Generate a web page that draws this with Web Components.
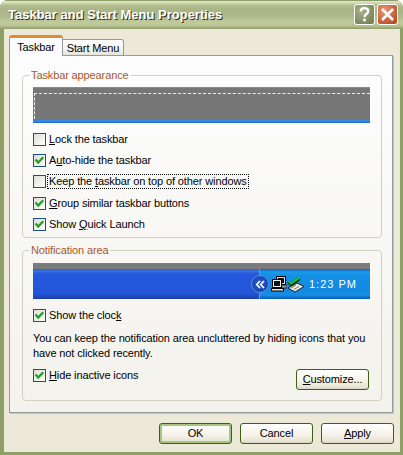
<!DOCTYPE html>
<html lang="en">
<head>
<meta charset="utf-8">
<title>Taskbar and Start Menu Properties</title>
<style>
    html, body { margin: 0; background: #fff; }
</style>
</head>
<body>
<xp-window caption="Taskbar and Start Menu Properties">
    <xp-tabs>
        <xp-group legend="Taskbar appearance" style="height:169px">
            <taskbar-preview></taskbar-preview>
            <check-row style="margin-top:6px"><u>L</u>ock the taskbar</check-row>
            <check-row checked>A<u>u</u>to-hide the taskbar</check-row>
            <check-row focused>Keep the <u>t</u>askbar on top of other windows</check-row>
            <check-row checked style="margin-top:1px"><u>G</u>roup similar taskbar buttons</check-row>
            <check-row checked>Show <u>Q</u>uick Launch</check-row>
        </xp-group>
        <xp-group legend="Notification area" style="height:157px;margin-top:6px">
            <tray-preview style="margin-top:1px"></tray-preview>
            <check-row checked style="margin-top:6px">Show the cloc<u>k</u></check-row>
            <hint-text>You can keep the notification area uncluttered by hiding icons that you have not clicked recently.</hint-text>
            <action-row>
                <check-row checked><u>H</u>ide inactive icons</check-row>
                <xp-button style="width:73px;margin:4px 1px 0 0"><u>C</u>ustomize...</xp-button>
            </action-row>
        </xp-group>
    </xp-tabs>
    <xp-button slot="buttons" default>OK</xp-button>
    <xp-button slot="buttons">Cancel</xp-button>
    <xp-button slot="buttons"><u>A</u>pply</xp-button>
</xp-window>

<script>
const UI_FONT = `"Liberation Sans", Arial, sans-serif`;

class XpWindow extends HTMLElement {
    constructor() {
        super();
        this.attachShadow({ mode: 'open' });
        this.shadowRoot.innerHTML = `
            <style>
                :host {
                    display: flex;
                    flex-direction: column;
                    width: 403px;
                    height: 455px;
                    box-sizing: border-box;
                    border-radius: 8px 8px 0 0;
                    overflow: hidden;
                    background: #8f9f68;
                    font: 11px/13px ${UI_FONT};
                    letter-spacing: -.12px;
                    color: #000;
                }
                .title {
                    flex: none;
                    display: flex;
                    align-items: center;
                    height: 29px;
                    padding: 0 5px 0 8px;
                    box-sizing: border-box;
                    background: linear-gradient(#8e9f6c 0, #8e9f6c 1px, #dfe6c2 1px, #d3dbb2 3px, #b3bf90 5px, #a9b585 9px, #adb98a 16px, #c2cb9c 23px, #b5c090 26px, #8f9f66 29px);
                }
                .caption {
                    flex: 1;
                    font: bold 13px/16px "Liberation Sans", Arial, sans-serif;
                    letter-spacing: 0;
                    color: #fff;
                    text-shadow: 1px 1px 0 #2b2b18;
                    white-space: nowrap;
                }
                .cap {
                    width: 21px;
                    height: 21px;
                    margin-left: 2px;
                    box-sizing: border-box;
                    border: 1px solid #fff;
                    border-radius: 3px;
                    display: flex;
                    align-items: center;
                    justify-content: center;
                }
                .help { background: radial-gradient(circle at 35% 30%, #a9b188, #767f56 85%); }
                .close { background: radial-gradient(circle at 35% 30%, #e89a76, #bd4a22 85%); }
                .body {
                    flex: 1;
                    display: flex;
                    flex-direction: column;
                    margin: 0 3px 3px 4px;
                    padding: 7px 6px 8px 5px;
                    background: #ece9d8;
                }
                .buttons {
                    flex: none;
                    display: flex;
                    justify-content: flex-end;
                    gap: 8px;
                    margin-top: 10px;
                }
            </style>
            <div class="title">
                <span class="caption"></span>
                <span class="cap help">
                    <svg width="13" height="15" viewBox="0 0 13 15"><path d="M2.8 4.5C2.8 2.4 4.5 1.2 6.5 1.2S10.2 2.4 10.2 4.2c0 2.8-3.7 2.8-3.7 5.8" fill="none" stroke="#fff" stroke-width="2.3"/><rect x="5.2" y="11.5" width="2.6" height="2.8" fill="#fff"/></svg>
                </span>
                <span class="cap close">
                    <svg width="15" height="15" viewBox="0 0 15 15"><path d="M2 2l11 11M13 2L2 13" fill="none" stroke="#fff" stroke-width="2.5"/></svg>
                </span>
            </div>
            <div class="body">
                <slot></slot>
                <div class="buttons"><slot name="buttons"></slot></div>
            </div>
        `;
        this.shadowRoot.querySelector('.caption').textContent = this.getAttribute('caption');
    }
}

class XpTabs extends HTMLElement {
    constructor() {
        super();
        this.attachShadow({ mode: 'open' });
        this.shadowRoot.innerHTML = `
            <style>
                :host { display: flex; flex-direction: column; flex: 1; min-height: 0; margin-right: 1px; }
                .strip { display: flex; align-items: flex-end; height: 20px; flex: none; margin-bottom: -1px; }
                .tab {
                    box-sizing: border-box;
                    position: relative;
                    text-align: center;
                }
                .on {
                    width: 54px;
                    height: 21px;
                    z-index: 2;
                    padding-top: 3px;
                    background: #fcfcfe;
                    border: 1px solid #919b9c;
                    border-top: 3px solid #e68b2c;
                    border-bottom: 0;
                    border-radius: 3px 3px 0 0;
                }
                .off {
                    width: 61px;
                    height: 17px;
                    padding-top: 2px;
                    background: linear-gradient(#fff, #f4f3ee 60%, #e6e4da);
                    border: 1px solid #919b9c;
                    border-left: 0;
                    border-radius: 0 3px 0 0;
                }
                .page {
                    flex: 1;
                    min-height: 0;
                    box-sizing: border-box;
                    padding: 13px 10px 0 12px;
                    border: 1px solid #919b9c;
                    box-shadow: 1px 1px 0 #c8c6b6;
                    background: linear-gradient(#fdfdfe, #f3f2ec);
                }
            </style>
            <div class="strip">
                <div class="tab on">Taskbar</div>
                <div class="tab off">Start Menu</div>
            </div>
            <div class="page"><slot></slot></div>
        `;
    }
}

class XpGroup extends HTMLElement {
    constructor() {
        super();
        this.attachShadow({ mode: 'open' });
        this.shadowRoot.innerHTML = `
            <style>
                :host { display: block; }
                fieldset {
                    margin: 0;
                    padding: 5px 11px 0 10px;
                    height: 100%;
                    box-sizing: border-box;
                    border: 1px solid #d0d0bf;
                    border-radius: 4px;
                }
                legend {
                    margin-left: -4px;
                    padding: 0 2px;
                    color: #a8582a;
                    line-height: 13px;
                }
            </style>
            <fieldset>
                <legend></legend>
                <slot></slot>
            </fieldset>
        `;
        this.shadowRoot.querySelector('legend').textContent = this.getAttribute('legend');
    }
}

class CheckRow extends HTMLElement {
    constructor() {
        super();
        this.attachShadow({ mode: 'open' });
        const tick = this.hasAttribute('checked')
            ? '<svg width="11" height="11" viewBox="0 0 11 11"><path d="M1.6 4.6L4.2 7.6L9.2 2.2" fill="none" stroke="#21a121" stroke-width="2.3"/></svg>'
            : '';
        this.shadowRoot.innerHTML = `
            <style>
                :host { display: flex; align-items: center; height: 21px; white-space: nowrap; }
                .box {
                    flex: none;
                    width: 13px;
                    height: 13px;
                    box-sizing: border-box;
                    margin-right: 2px;
                    border: 1px solid #1c5180;
                    background: linear-gradient(135deg, #dcdcd7, #fff);
                    display: flex;
                    align-items: center;
                    justify-content: center;
                }
                .label { padding: 0 1px; }
                :host([focused]) .label { outline: 1px dotted #000; }
            </style>
            <span class="box">${tick}</span>
            <span class="label"><slot></slot></span>
        `;
    }
}

class HintText extends HTMLElement {
    constructor() {
        super();
        this.attachShadow({ mode: 'open' });
        this.shadowRoot.innerHTML = `
            <style>
                :host { display: block; margin-top: 5px; line-height: 15px; }
            </style>
            <slot></slot>
        `;
    }
}

class ActionRow extends HTMLElement {
    constructor() {
        super();
        this.attachShadow({ mode: 'open' });
        this.shadowRoot.innerHTML = `
            <style>
                :host { display: flex; align-items: flex-start; justify-content: space-between; margin-top: 4px; }
            </style>
            <slot></slot>
        `;
    }
}

class XpButton extends HTMLElement {
    constructor() {
        super();
        this.attachShadow({ mode: 'open' });
        this.shadowRoot.innerHTML = `
            <style>
                :host {
                    display: flex;
                    align-items: center;
                    justify-content: center;
                    width: 73px;
                    height: 21px;
                    box-sizing: border-box;
                    border: 1px solid #3f5f14;
                    border-radius: 3px;
                    background: linear-gradient(#fff, #f5f3ea 55%, #e8e4d4 90%, #d8d3bf);
                }
                :host([default]) {
                    box-shadow: inset 0 0 0 2px #a6c581;
                }
            </style>
            <slot></slot>
        `;
    }
}

class TaskbarPreview extends HTMLElement {
    constructor() {
        super();
        this.attachShadow({ mode: 'open' });
        this.shadowRoot.innerHTML = `
            <style>
                :host {
                    display: block;
                    height: 36px;
                    box-sizing: border-box;
                    padding: 6px 0 4px 1px;
                    background: linear-gradient(#8a8a8a 1px, #777 1px);
                }
                .drag {
                    height: 26px;
                    box-sizing: border-box;
                    border-top: 1px dashed #eee;
                    border-left: 1px dashed #eee;
                }
                .strip { height: 4px; margin: 0 0 -4px -1px; background: linear-gradient(#2f80e0, #3a8ce8 50%, #1f62c8); }
            </style>
            <div class="drag"></div>
            <div class="strip"></div>
        `;
    }
}

class TrayPreview extends HTMLElement {
    constructor() {
        super();
        this.attachShadow({ mode: 'open' });
        this.shadowRoot.innerHTML = `
            <style>
                :host {
                    display: flex;
                    height: 36px;
                    box-sizing: border-box;
                    border-top: 6px solid #7b7b7b;
                    color: #fff;
                }
                .bar {
                    flex: 1;
                    background: linear-gradient(#2a5fd0 0, #3a72e0 2px, #2558dc 5px, #2355d8 24px, #1f4ec8 27px, #1a3fa4 30px);
                }
                .tray {
                    flex: none;
                    position: relative;
                    width: 111px;
                    box-sizing: border-box;
                    display: flex;
                    align-items: center;
                    padding-left: 11px;
                    border-left: 1px solid #19b9f3;
                    background: linear-gradient(#0f62c0 0, #1a9ce8 3px, #1290e6 6px, #1488e0 22px, #1590e4 26px, #0c55b8 30px);
                }
                .chev {
                    position: absolute;
                    left: -9px;
                    top: 6px;
                    width: 18px;
                    height: 18px;
                    border-radius: 50%;
                    box-sizing: border-box;
                    border: 1px solid #5d8fe0;
                    background: radial-gradient(circle at 50% 45%, #2a5dd0, #123a9c);
                    display: flex;
                    align-items: center;
                    justify-content: center;
                }
                .clock { margin-left: 4px; letter-spacing: 1px; white-space: nowrap; }
                svg { display: block; flex: none; }
            </style>
            <div class="bar"></div>
            <div class="tray">
                <span class="chev"><svg width="11" height="9" viewBox="0 0 11 9"><path d="M5 1L1.7 4.5L5 8M9 1L5.7 4.5L9 8" fill="none" stroke="#fff" stroke-width="1.6"/></svg></span>
                <svg width="16" height="16" viewBox="0 0 16 16">
                    <rect x="5.5" y="0.5" width="9" height="8" fill="#d8d8d8" stroke="#000"/>
                    <rect x="7" y="2" width="6" height="5" fill="#111"/>
                    <rect x="7" y="9" width="9" height="3" fill="#999" stroke="#000" stroke-width=".7"/>
                    <rect x="1.5" y="3.5" width="9" height="8" fill="#f0f0f0" stroke="#000"/>
                    <rect x="3" y="5" width="6" height="5" fill="#111"/>
                    <rect x="0.5" y="12.5" width="12" height="2.5" fill="#e4e4e4" stroke="#000"/>
                </svg>
                <svg width="18" height="17" viewBox="0 0 18 17">
                    <path d="M1.5 5.5L4 8.5L12.5 2.5" fill="none" stroke="#083c10" stroke-width="3.4"/>
                    <path d="M1.5 5L4 7.5L12.5 1.7" fill="none" stroke="#22c035" stroke-width="2"/>
                    <path d="M1 12L10 7L17 10.5L8 16Z" fill="#ecece6" stroke="#1c1c1c" stroke-width="1"/>
                    <path d="M4 12L9 9M7 13.5L12 10.5" stroke="#777" stroke-width="1"/>
                </svg>
                <span class="clock">1:23 PM</span>
            </div>
        `;
    }
}

customElements.define('xp-window', XpWindow);
customElements.define('xp-tabs', XpTabs);
customElements.define('xp-group', XpGroup);
customElements.define('check-row', CheckRow);
customElements.define('hint-text', HintText);
customElements.define('action-row', ActionRow);
customElements.define('xp-button', XpButton);
customElements.define('taskbar-preview', TaskbarPreview);
customElements.define('tray-preview', TrayPreview);
</script>
</body>
</html>
